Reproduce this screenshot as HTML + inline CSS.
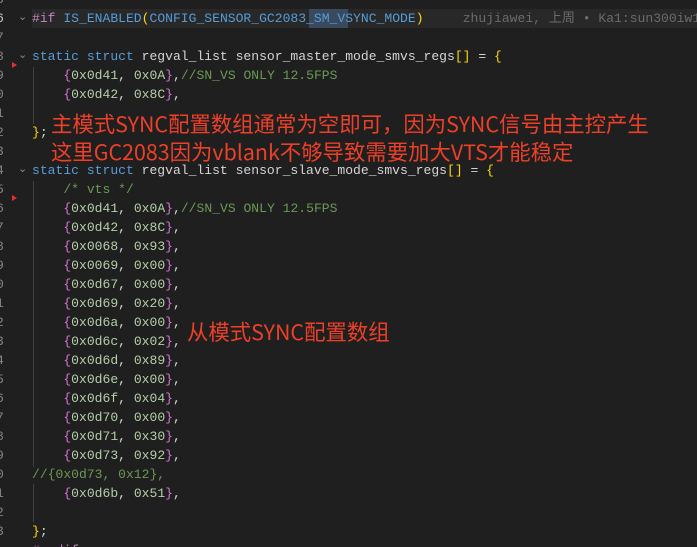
<!DOCTYPE html><html><head><meta charset="utf-8"><style>
html,body{margin:0;width:697px;height:547px;overflow:hidden}
body{background:#1f1f1f;position:relative;font-family:"Liberation Mono",monospace;font-size:13.05px;color:#d4d4d4}
.l{position:absolute;left:32px;height:19px;line-height:19px;white-space:pre}
.n{position:absolute;left:-4px;height:19px;line-height:19px;color:#858585;white-space:pre}
.k{color:#569cd6}.c{color:#6a9955}.h{color:#b5cea8}.p{color:#da70d6}.y{color:#ffd700}.m{color:#c586c0}.v{color:#4fc1ff}
.g{position:absolute;left:33px;width:1px;background:#404040}
.r{position:absolute;color:#ec4028;font-family:"Noto Sans CJK SC",sans-serif;font-size:21.4px;white-space:pre;line-height:28px}
.f{position:absolute;left:18px;color:#8a8a8a;font-size:11px;height:19px;line-height:19px}
</style></head><body>
<div style="position:absolute;left:32px;top:9px;width:665px;height:19px;background:#282828"></div>
<div style="position:absolute;left:309px;top:9px;width:39px;height:19px;background:#3a4a5e"></div>
<div class="g" style="top:67px;height:57px"></div>
<div class="g" style="top:181px;height:286px"></div>
<div class="g" style="top:484px;height:38px"></div>
<div class="n" style="top:-10px">5</div>
<div class="n" style="top:9px;color:#ccc">6</div><div class="f" style="top:9px">⌄</div>
<div class="l" style="top:9px"><span class="m">#if</span> <span class="k">IS_ENABLED</span><span class="y">(</span><span class="k">CONFIG_SENSOR_GC2083_SM_VSYNC_MODE</span><span class="y">)</span>     <span style="color:#6b6b6b">zhujiawei, 上周 • Ka1:sun300iw1</span></div>
<div class="n" style="top:28px">7</div>
<div class="n" style="top:47px">8</div><div class="f" style="top:47px">⌄</div>
<div class="l" style="top:47px"><span class="k">static</span> <span class="k">struct</span> regval_list sensor_master_mode_smvs_regs<span class="y">[]</span> = <span class="y">{</span></div>
<div style="position:absolute;left:12px;top:62px;width:0;height:0;border-left:5px solid #e03030;border-top:3px solid transparent;border-bottom:3px solid transparent"></div>
<div class="n" style="top:66px">9</div>
<div class="l" style="top:66px">    <span class="p">{</span><span class="h">0x0d41</span>, <span class="h">0x0A</span><span class="p">}</span>,<span class="c">//SN_VS ONLY 12.5FPS</span></div>
<div class="n" style="top:85px">0</div>
<div class="l" style="top:85px">    <span class="p">{</span><span class="h">0x0d42</span>, <span class="h">0x8C</span><span class="p">}</span>,</div>
<div class="n" style="top:104px">1</div>
<div class="n" style="top:123px">2</div>
<div class="l" style="top:123px"><span class="y">}</span>;</div>
<div class="n" style="top:142px">3</div>
<div class="n" style="top:161px">4</div><div class="f" style="top:161px">⌄</div>
<div class="l" style="top:161px"><span class="k">static</span> <span class="k">struct</span> regval_list sensor_slave_mode_smvs_regs<span class="y">[]</span> = <span class="y">{</span></div>
<div class="n" style="top:180px">5</div>
<div class="l" style="top:180px">    <span class="c">/* vts */</span></div>
<div style="position:absolute;left:12px;top:195px;width:0;height:0;border-left:5px solid #e03030;border-top:3px solid transparent;border-bottom:3px solid transparent"></div>
<div class="n" style="top:199px">6</div>
<div class="l" style="top:199px">    <span class="p">{</span><span class="h">0x0d41</span>, <span class="h">0x0A</span><span class="p">}</span>,<span class="c">//SN_VS ONLY 12.5FPS</span></div>
<div class="n" style="top:218px">7</div><div class="l" style="top:218px">    <span class="p">{</span><span class="h">0x0d42</span>, <span class="h">0x8C</span><span class="p">}</span>,</div>
<div class="n" style="top:237px">8</div><div class="l" style="top:237px">    <span class="p">{</span><span class="h">0x0068</span>, <span class="h">0x93</span><span class="p">}</span>,</div>
<div class="n" style="top:256px">9</div><div class="l" style="top:256px">    <span class="p">{</span><span class="h">0x0069</span>, <span class="h">0x00</span><span class="p">}</span>,</div>
<div class="n" style="top:275px">0</div><div class="l" style="top:275px">    <span class="p">{</span><span class="h">0x0d67</span>, <span class="h">0x00</span><span class="p">}</span>,</div>
<div class="n" style="top:294px">1</div><div class="l" style="top:294px">    <span class="p">{</span><span class="h">0x0d69</span>, <span class="h">0x20</span><span class="p">}</span>,</div>
<div class="n" style="top:313px">2</div><div class="l" style="top:313px">    <span class="p">{</span><span class="h">0x0d6a</span>, <span class="h">0x00</span><span class="p">}</span>,</div>
<div class="n" style="top:332px">3</div><div class="l" style="top:332px">    <span class="p">{</span><span class="h">0x0d6c</span>, <span class="h">0x02</span><span class="p">}</span>,</div>
<div class="n" style="top:351px">4</div><div class="l" style="top:351px">    <span class="p">{</span><span class="h">0x0d6d</span>, <span class="h">0x89</span><span class="p">}</span>,</div>
<div class="n" style="top:370px">5</div><div class="l" style="top:370px">    <span class="p">{</span><span class="h">0x0d6e</span>, <span class="h">0x00</span><span class="p">}</span>,</div>
<div class="n" style="top:389px">6</div><div class="l" style="top:389px">    <span class="p">{</span><span class="h">0x0d6f</span>, <span class="h">0x04</span><span class="p">}</span>,</div>
<div class="n" style="top:408px">7</div><div class="l" style="top:408px">    <span class="p">{</span><span class="h">0x0d70</span>, <span class="h">0x00</span><span class="p">}</span>,</div>
<div class="n" style="top:427px">8</div><div class="l" style="top:427px">    <span class="p">{</span><span class="h">0x0d71</span>, <span class="h">0x30</span><span class="p">}</span>,</div>
<div class="n" style="top:446px">9</div><div class="l" style="top:446px">    <span class="p">{</span><span class="h">0x0d73</span>, <span class="h">0x92</span><span class="p">}</span>,</div>
<div class="n" style="top:465px">0</div><div class="l" style="top:465px"><span class="c">//{0x0d73, 0x12},</span></div>
<div class="n" style="top:484px">1</div><div class="l" style="top:484px">    <span class="p">{</span><span class="h">0x0d6b</span>, <span class="h">0x51</span><span class="p">}</span>,</div>
<div class="n" style="top:503px">2</div>
<div class="n" style="top:522px">3</div><div class="l" style="top:522px"><span class="y">}</span>;</div>
<div class="l" style="top:541px;color:#c586c0">#endif</div>
<div class="r" style="left:51px;top:110px">主模式SYNC配置数组通常为空即可，因为SYNC信号由主控产生</div>
<div class="r" style="left:51px;top:138px">这里GC2083因为vblank不够导致需要加大VTS才能稳定</div>
<div class="r" style="left:187px;top:318px">从模式SYNC配置数组</div>
</body></html>
